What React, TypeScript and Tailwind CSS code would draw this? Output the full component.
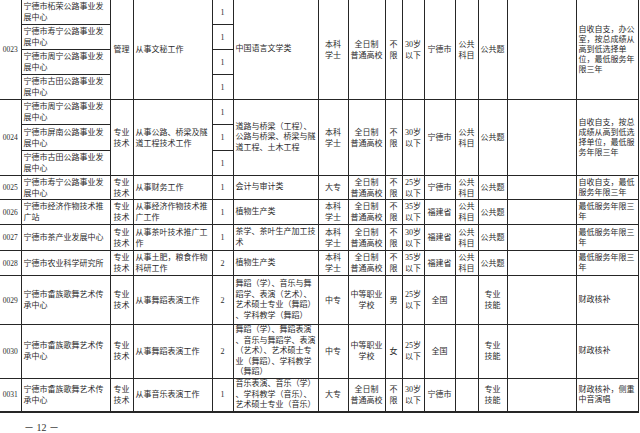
import React from "react"

interface Sub {
  unit: string
  n: string
  h: string
}

interface Post {
  code: string
  subs: Sub[]
  cat: string
  job: string
  major: string
  edu: string
  kind: string
  sex: string
  age: string
  loc: string
  exam: string
  test: string
  note: string
}

const roadUnit = (name: string) => `宁德市${name}公路事业发\n展中心`
const danceUnit = "宁德市畲族歌舞艺术传\n承中心"

const posts: Post[] = [
  {
    code: "0023",
    subs: [
      { unit: roadUnit("柘荣"), n: "1", h: "h-[25px]" },
      { unit: roadUnit("寿宁"), n: "1", h: "h-[25px]" },
      { unit: roadUnit("周宁"), n: "1", h: "h-[25px]" },
      { unit: roadUnit("古田"), n: "1", h: "h-[25px]" },
    ],
    cat: "管理",
    job: "从事文秘工作",
    major: "中国语言文学类",
    edu: "本科\n学士",
    kind: "全日制\n普通高校",
    sex: "不\n限",
    age: "30岁\n以下",
    loc: "宁德市",
    exam: "公共\n科目",
    test: "公共题",
    note: "自收自支，办公\n室，按总成绩从\n高到低选择单\n位，最低服务年\n限三年",
  },
  {
    code: "0024",
    subs: [
      { unit: roadUnit("周宁"), n: "1", h: "h-[25px]" },
      { unit: roadUnit("屏南"), n: "1", h: "h-[26px]" },
      { unit: roadUnit("古田"), n: "1", h: "h-[25px]" },
    ],
    cat: "专业\n技术",
    job: "从事公路、桥梁及隧\n道工程技术工作",
    major: "道路与桥梁（工程）、\n公路与桥梁、桥梁与隧\n道工程、土木工程",
    edu: "本科\n学士",
    kind: "全日制\n普通高校",
    sex: "不\n限",
    age: "30岁\n以下",
    loc: "宁德市",
    exam: "公共\n科目",
    test: "公共题",
    note: "自收自支，按总\n成绩从高到低选\n择单位，最低服\n务年限三年",
  },
  {
    code: "0025",
    subs: [{ unit: roadUnit("寿宁"), n: "1", h: "h-[24px]" }],
    cat: "专业\n技术",
    job: "从事财务工作",
    major: "会计与审计类",
    edu: "大专",
    kind: "全日制\n普通高校",
    sex: "不\n限",
    age: "25岁\n以下",
    loc: "宁德市",
    exam: "公共\n科目",
    test: "公共题",
    note: "自收自支，最低\n服务年限三年",
  },
  {
    code: "0026",
    subs: [{ unit: "宁德市经济作物技术推\n广站", n: "1", h: "h-[25px]" }],
    cat: "专业\n技术",
    job: "从事经济作物技术推\n广工作",
    major: "植物生产类",
    edu: "本科\n学士",
    kind: "全日制\n普通高校",
    sex: "不\n限",
    age: "35岁\n以下",
    loc: "福建省",
    exam: "公共\n科目",
    test: "公共题",
    note: "最低服务年限三\n年",
  },
  {
    code: "0027",
    subs: [{ unit: "宁德市茶产业发展中心", n: "1", h: "h-[26px]" }],
    cat: "专业\n技术",
    job: "从事茶叶技术推广工\n作",
    major: "茶学、茶叶生产加工技\n术",
    edu: "本科\n学士",
    kind: "全日制\n普通高校",
    sex: "不\n限",
    age: "30岁\n以下",
    loc: "福建省",
    exam: "公共\n科目",
    test: "公共题",
    note: "最低服务年限三\n年",
  },
  {
    code: "0028",
    subs: [{ unit: "宁德市农业科学研究所", n: "2", h: "h-[25px]" }],
    cat: "专业\n技术",
    job: "从事土肥，粮食作物\n科研工作",
    major: "植物生产类",
    edu: "本科\n学士",
    kind: "全日制\n普通高校",
    sex: "不\n限",
    age: "35岁\n以下",
    loc: "福建省",
    exam: "公共\n科目",
    test: "公共题",
    note: "最低服务年限三\n年",
  },
  {
    code: "0029",
    subs: [{ unit: danceUnit, n: "2", h: "h-[49px]" }],
    cat: "专业\n技术",
    job: "从事舞蹈表演工作",
    major: "舞蹈（学）、音乐与舞\n蹈学、表演（艺术）、\n艺术硕士专业（舞蹈）\n、学科教学（舞蹈）",
    edu: "中专",
    kind: "中等职业\n学校",
    sex: "男",
    age: "25岁\n以下",
    loc: "全国",
    exam: "",
    test: "专业\n技能",
    note: "财政核补",
  },
  {
    code: "0030",
    subs: [{ unit: danceUnit, n: "2", h: "h-[51px]" }],
    cat: "专业\n技术",
    job: "从事舞蹈表演工作",
    major: "舞蹈（学）、舞蹈表演\n、音乐与舞蹈学、表演\n（艺术）、艺术硕士专\n业（舞蹈）、学科教学\n（舞蹈）",
    edu: "中专",
    kind: "中等职业\n学校",
    sex: "女",
    age: "25岁\n以下",
    loc: "全国",
    exam: "",
    test: "专业\n技能",
    note: "财政核补",
  },
  {
    code: "0031",
    subs: [{ unit: danceUnit, n: "1", h: "h-[34px]" }],
    cat: "专业\n技术",
    job: "从事音乐表演工作",
    major: "音乐表演、音乐（学）\n、学科教学（音乐）、\n艺术硕士专业（音乐）",
    edu: "大专",
    kind: "全日制\n普通高校",
    sex: "不\n限",
    age: "30岁\n以下",
    loc: "宁德市",
    exam: "",
    test: "专业\n技能",
    note: "财政核补，侧重\n中音演唱",
  },
]

const cell = "border border-[#262626] py-0 align-middle whitespace-pre-line"
const left = `${cell} px-[2px] text-left`
const mid = `${cell} px-0 text-center`

export default function App() {
  return (
    <div className="w-[640px] h-[433px] overflow-hidden bg-white text-[#2b2b2b] font-['Liberation_Serif','Noto_Sans_CJK_SC',serif] text-[8px] leading-[11px]">
      <table className="table-fixed border-collapse w-[638px] -mt-px border-b-2 border-[#262626]">
        <colgroup>
          <col className="w-[21px]" />
          <col className="w-[89px]" />
          <col className="w-[23px]" />
          <col className="w-[79px]" />
          <col className="w-[21px]" />
          <col className="w-[85px]" />
          <col className="w-[30px]" />
          <col className="w-[37px]" />
          <col className="w-[17px]" />
          <col className="w-[22px]" />
          <col className="w-[31px]" />
          <col className="w-[23px]" />
          <col className="w-[29px]" />
          <col className="w-[69px]" />
          <col className="w-[62px]" />
        </colgroup>
        <tbody>
          {posts.map((p) => {
            const span = p.subs.length
            return p.subs.map((s, i) => (
              <tr key={`${p.code}-${i}`} className={s.h}>
                {i === 0 && (
                  <td rowSpan={span} className={`${mid} text-[7.5px] border-l-0`}>
                    {p.code}
                  </td>
                )}
                <td className={left}>{s.unit}</td>
                {i === 0 && (
                  <>
                    <td rowSpan={span} className={mid}>{p.cat}</td>
                    <td rowSpan={span} className={left}>{p.job}</td>
                  </>
                )}
                <td className={mid}>{s.n}</td>
                {i === 0 && (
                  <>
                    <td rowSpan={span} className={`${left} leading-[10.5px]`}>{p.major}</td>
                    <td rowSpan={span} className={mid}>{p.edu}</td>
                    <td rowSpan={span} className={mid}>{p.kind}</td>
                    <td rowSpan={span} className={mid}>{p.sex}</td>
                    <td rowSpan={span} className={mid}>{p.age}</td>
                    <td rowSpan={span} className={mid}>{p.loc}</td>
                    <td rowSpan={span} className={mid}>{p.exam}</td>
                    <td rowSpan={span} className={mid}>{p.test}</td>
                    <td rowSpan={span} className={mid}></td>
                    <td rowSpan={span} className={`${left} leading-[10px]`}>{p.note}</td>
                  </>
                )}
              </tr>
            ))
          })}
        </tbody>
      </table>
      <div className="pl-[24px] pt-[10px] text-[10px] leading-[10px] text-[#333]">－ 12 －</div>
    </div>
  )
}
